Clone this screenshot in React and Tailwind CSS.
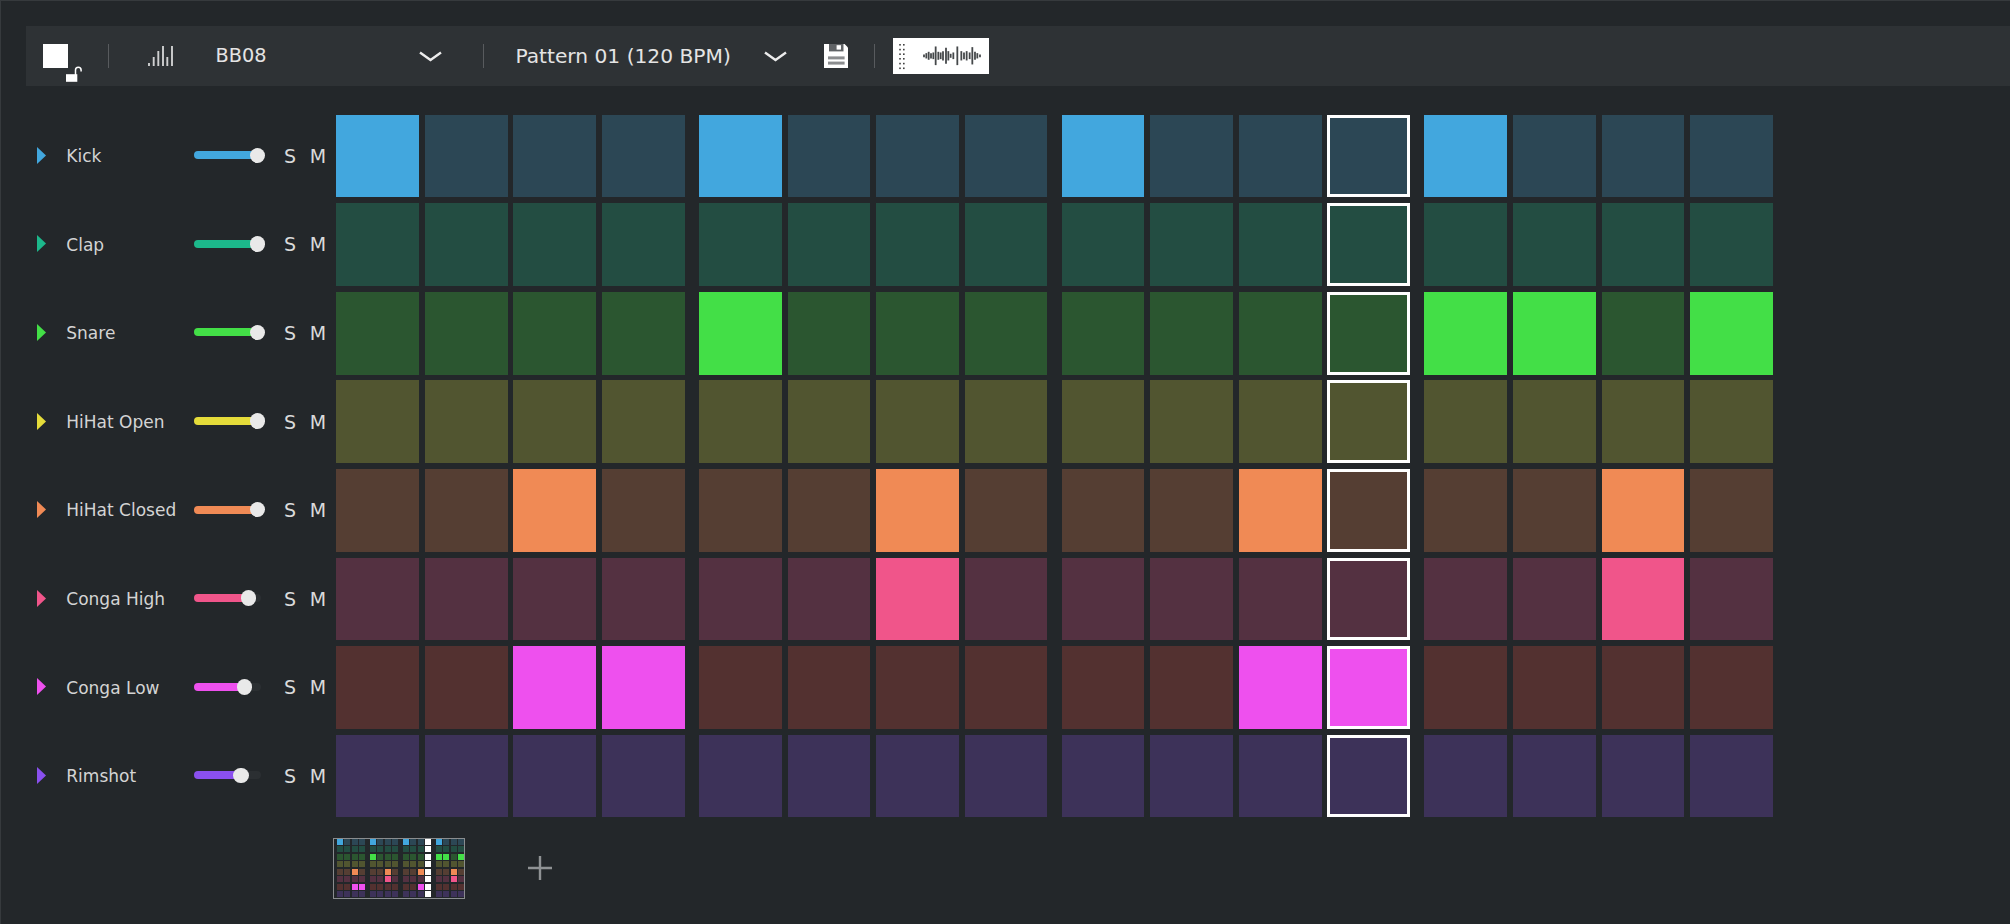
const TRACKS = [
  { name: 'Kick', on: 'bg-[#42a7de]', off: 'bg-[#2c4755]', fill: 'bg-[#42a7de]', arrow: 'fill-[#42a7de]', thumb: 63.4, steps: [0, 4, 8, 12] },
  { name: 'Clap', on: 'bg-[#1cb88b]', off: 'bg-[#234d42]', fill: 'bg-[#1cb88b]', arrow: 'fill-[#1cb88b]', thumb: 63.4, steps: [] },
  { name: 'Snare', on: 'bg-[#43df47]', off: 'bg-[#2b5630]', fill: 'bg-[#43df47]', arrow: 'fill-[#43df47]', thumb: 63.4, steps: [4, 12, 13, 15] },
  { name: 'HiHat Open', on: 'bg-[#e5dc3a]', off: 'bg-[#515530]', fill: 'bg-[#e5dc3a]', arrow: 'fill-[#e5dc3a]', thumb: 63.4, steps: [] },
  { name: 'HiHat Closed', on: 'bg-[#f08a55]', off: 'bg-[#553e33]', fill: 'bg-[#f08a55]', arrow: 'fill-[#f08a55]', thumb: 63.4, steps: [2, 6, 10, 14] },
  { name: 'Conga High', on: 'bg-[#f0558a]', off: 'bg-[#543141]', fill: 'bg-[#f0558a]', arrow: 'fill-[#f0558a]', thumb: 54.4, steps: [6, 14] },
  { name: 'Conga Low', on: 'bg-[#ee50ee]', off: 'bg-[#533130]', fill: 'bg-[#ee50ee]', arrow: 'fill-[#ee50ee]', thumb: 50.4, steps: [2, 3, 10, 11] },
  { name: 'Rimshot', on: 'bg-[#8a50ee]', off: 'bg-[#3d3259]', fill: 'bg-[#8a50ee]', arrow: 'fill-[#8a50ee]', thumb: 47, steps: [] },
];

const GROUPS = [[0, 1, 2, 3], [4, 5, 6, 7], [8, 9, 10, 11], [12, 13, 14, 15]];
const CURRENT = 11;

const WAVE = [
  [340, 4], [347, 8], [354, 12], [361, 8], [368, 10], [375, 28], [383, 12], [390, 10], [397, 14], [406, 24], [413, 14],
  [420, 6], [428, 10], [440, 28], [452, 14], [460, 10], [468, 14], [477, 10], [485, 26], [493, 12], [500, 8], [508, 4],
];

function Divider({ className }) {
  return <div className={`h-[24px] w-[1px] shrink-0 bg-[#585b5e] ${className}`} />;
}

function Chevron({ className }) {
  return (
    <svg viewBox="0 0 23 11" className={`h-[11px] w-[23px] shrink-0 ${className}`}>
      <path d="M1 1.5 L11.5 9 L22 1.5" fill="none" stroke="#ececec" strokeWidth="2.4" />
    </svg>
  );
}

function Toolbar() {
  return (
    <div className="ml-[25px] mt-[25px] flex h-[60px] items-center bg-[#2e3235] text-[19.3px] text-[#e4e4e4]">
      <div className="relative ml-[17.3px] h-[24.4px] w-[24.4px] shrink-0 bg-white">
        <svg viewBox="0 0 16 16" className="absolute left-[22.7px] top-[22.4px] h-[16px] w-[16px]">
          <rect x="0" y="8.2" width="11.3" height="7.6" fill="#fff" />
          <path d="M9.5 9 V4 a2.8 2.8 0 0 1 5.6 0 V5.5" fill="none" stroke="#fff" strokeWidth="1.5" />
        </svg>
      </div>
      <Divider className="ml-[40.8px]" />
      <svg viewBox="0 0 26 22" className="ml-[39px] h-[22px] w-[26px] shrink-0">
        <g stroke="#cfd0d1" strokeWidth="1.9">
          <path d="M1 21 V18" />
          <path d="M5.7 21 V12" />
          <path d="M10.3 21 V6" />
          <path d="M15 21 V1" />
          <path d="M19.3 21 V12" />
          <path d="M24 21 V1" />
        </g>
      </svg>
      <div className="ml-[41px] w-[204px] shrink-0">BB08</div>
      <Chevron />
      <Divider className="ml-[41px]" />
      <div className="ml-[31px] w-[215px] shrink-0 whitespace-nowrap text-[20.2px]">Pattern 01 (120 BPM)</div>
      <Chevron className="ml-[33.6px]" />
      <svg viewBox="0 0 24.4 24.2" className="ml-[36.7px] h-[24.2px] w-[24.4px] shrink-0">
        <path d="M0 0 H20.6 L24.4 3.8 V24.2 H0 Z" fill="#fff" />
        <rect x="5" y="0" width="14.5" height="7.4" fill="#606366" />
        <rect x="12.6" y="1.2" width="4.4" height="4.4" fill="#fff" />
        <rect x="4" y="12.4" width="16.6" height="3" fill="#8b8d8f" />
        <rect x="4" y="17.6" width="16.6" height="3" fill="#8b8d8f" />
      </svg>
      <Divider className="ml-[25.8px]" />
      <div className="ml-[17.9px] h-[35.7px] w-[96.5px] shrink-0 bg-white">
        <svg viewBox="0 0 96.5 35.7" className="h-full w-full">
          <g fill="#3f3f3f">
            {[6, 10.8, 15.4, 20, 24.8, 29.5].map((y) => (
              <g key={y}>
                <rect x="6.2" y={y} width="1.6" height="1.6" />
                <rect x="10" y={y} width="1.6" height="1.6" />
              </g>
            ))}
          </g>
          <g stroke="#45484a" strokeWidth="1.8">
            {WAVE.map(([x, h]) => (
              <line key={x} x1={(x - 247) / 3} x2={(x - 247) / 3} y1={17.8 - h / 3} y2={17.8 + h / 3} />
            ))}
          </g>
        </svg>
      </div>
    </div>
  );
}

function Slider({ track }) {
  return (
    <div className="relative mb-[1.4px] flex h-[16px] w-[72px] shrink-0 items-center">
      <div className="h-[8px] w-[67px] rounded-full bg-[#2b2f32]" />
      <div className={`absolute left-0 h-[8px] rounded-full ${track.fill}`} style={{ width: track.thumb }} />
      <div
        className="absolute h-[15.6px] w-[15.6px] rounded-full bg-[#e9e9e9]"
        style={{ left: track.thumb - 7.8 }}
      />
    </div>
  );
}

function Row({ track }) {
  return (
    <div className="flex h-[82.7px] items-center">
      <svg viewBox="0 0 9 17" className="mb-[1.4px] ml-[36.3px] h-[17px] w-[9px] shrink-0">
        <polygon points="0,0 9,8.5 0,17" className={track.arrow} />
      </svg>
      <div className="ml-[20px] mt-[1.5px] w-[128px] shrink-0 whitespace-nowrap text-[17px] text-[#d4d4d4]">{track.name}</div>
      <Slider track={track} />
      <div className="ml-[17.7px] w-[25.8px] shrink-0 text-[19px] text-[#dadada]">S</div>
      <div className="w-[25.5px] shrink-0 text-[19px] text-[#dadada]">M</div>
      <div className="ml-[1px] flex gap-[14.3px]">
        {GROUPS.map((group) => (
          <div key={group[0]} className="flex gap-[5.9px]">
            {group.map((step) => (
              <div
                key={step}
                className={`h-[82.7px] w-[82.7px] ${track.steps.includes(step) ? track.on : track.off} ${
                  step === CURRENT ? 'border-[3px] border-white' : ''
                }`}
              />
            ))}
          </div>
        ))}
      </div>
    </div>
  );
}

function Thumbnail() {
  return (
    <div className="ml-[332.3px] flex h-[61px] w-[132px] shrink-0 flex-col gap-[1.3px] overflow-hidden border-[1.5px] border-[#8a8d8f] pl-[2.5px]">
      {TRACKS.map((track) => (
        <div key={track.name} className="flex shrink-0 gap-[4.3px]">
          {GROUPS.map((group) => (
            <div key={group[0]} className="flex shrink-0 gap-[1.3px]">
              {group.map((step) => (
                <div
                  key={step}
                  className={`h-[6.2px] w-[6.2px] shrink-0 ${
                    step === CURRENT ? 'bg-white' : track.steps.includes(step) ? track.on : track.off
                  }`}
                />
              ))}
            </div>
          ))}
        </div>
      ))}
    </div>
  );
}

export default function App() {
  return (
    <div className="h-[924px] w-[2010px] overflow-hidden border-l border-t border-[#363a3d] bg-[#23272a] font-['DejaVu_Sans',sans-serif]">
      <Toolbar />
      <div className="mt-[28.7px] flex flex-col gap-[5.9px]">
        {TRACKS.map((track) => (
          <Row key={track.name} track={track} />
        ))}
      </div>
      <div className="mt-[20.4px] flex items-center">
        <Thumbnail />
        <svg viewBox="0 0 24 24" className="ml-[63px] h-[24px] w-[24px] shrink-0">
          <path d="M12 0 V24 M0 12 H24" stroke="#8f9294" strokeWidth="2.4" />
        </svg>
      </div>
    </div>
  );
}
